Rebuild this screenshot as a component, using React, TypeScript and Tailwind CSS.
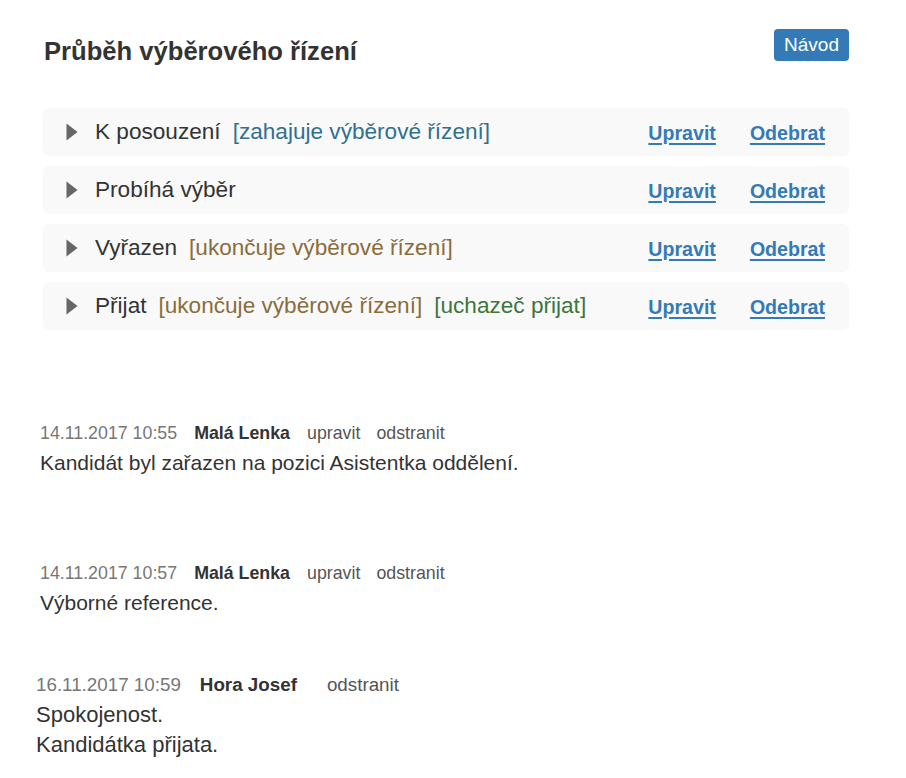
import React from "react";

const font = { fontFamily: '"Liberation Sans", Arial, sans-serif' };

function Triangle() {
  return (
    <svg width="12" height="18" viewBox="0 0 12 18" className="shrink-0">
      <path d="M0.5 0.5 L11.5 9 L0.5 17.5 Z" fill="#666666" />
    </svg>
  );
}

type Tag = { text: string; color: string };

const rows: { name: string; tags: Tag[] }[] = [
  { name: "K posouzení", tags: [{ text: "[zahajuje výběrové řízení]", color: "text-[#31708f]" }] },
  { name: "Probíhá výběr", tags: [] },
  { name: "Vyřazen", tags: [{ text: "[ukončuje výběrové řízení]", color: "text-[#8a6d3b]" }] },
  {
    name: "Přijat",
    tags: [
      { text: "[ukončuje výběrové řízení]", color: "text-[#8a6d3b]" },
      { text: "[uchazeč přijat]", color: "text-[#3c763d]" },
    ],
  },
];

function Row({ name, tags }: { name: string; tags: Tag[] }) {
  return (
    <div className="flex items-center h-[48px] rounded-[6px] bg-[#f9f9f9] pl-[23px] pr-[24px]">
      <Triangle />
      <div className="flex items-center ml-[17px] text-[22.6px] leading-[30px] text-[#333]">
        <span>{name}</span>
        {tags.map((t, i) => (
          <span key={i} className={`ml-[12px] ${t.color}`}>
            {t.text}
          </span>
        ))}
      </div>
      <div className="ml-auto flex items-center gap-[34px] text-[19.6px] font-bold text-[#337ab7] pt-[3px]">
        <a className="underline underline-offset-[3px] decoration-[2px]">Upravit</a>
        <a className="underline underline-offset-[3px] decoration-[2px]">Odebrat</a>
      </div>
    </div>
  );
}

function Comment({
  date,
  author,
  edit,
  lines,
  indent,
  top,
  large,
}: {
  date: string;
  author: string;
  edit: boolean;
  lines: string[];
  indent: string;
  top: string;
  large?: boolean;
}) {
  return (
    <div className={`${indent} ${top}`}>
      <div className={`flex items-center leading-[30px] ${large ? "text-[18.8px]" : "text-[17.8px]"}`}>
        <span className="text-[#777]">{date}</span>
        <span className={`${large ? "ml-[19px]" : "ml-[17px]"} font-bold text-[#333]`}>{author}</span>
        {edit ? <span className="ml-[17px] text-[#555]">upravit</span> : null}
        <span className={`${edit ? "ml-[16px]" : "ml-[30px]"} text-[#555]`}>odstranit</span>
      </div>
      {lines.map((l, i) => (
        <div key={i} className={`leading-[30px] text-[#333] ${large ? "text-[22px]" : "text-[21px]"}`}>
          {l}
        </div>
      ))}
    </div>
  );
}

export default function App() {
  return (
    <div className="w-[906px] min-h-[778px] bg-white" style={font}>
      <div className="ml-[43px] w-[806px] pt-[29px]">
        <div className="flex items-start justify-between">
          <h1 className="mt-[6px] ml-[1px] text-[25.6px] leading-[32px] font-bold text-[#333]">
            Průběh výběrového řízení
          </h1>
          <button className="h-[32px] w-[75px] rounded-[4px] bg-[#337ab7] text-white text-[19px] leading-[32px]">
            Návod
          </button>
        </div>
        <div className="mt-[41px] flex flex-col gap-[10px]">
          {rows.map((r, i) => (
            <Row key={i} name={r.name} tags={r.tags} />
          ))}
        </div>
      </div>
      <Comment
        top="mt-[88px]"
        indent="ml-[40px]"
        date="14.11.2017 10:55"
        author="Malá Lenka"
        edit
        lines={["Kandidát byl zařazen na pozici Asistentka oddělení."]}
      />
      <Comment
        top="mt-[80px]"
        indent="ml-[40px]"
        date="14.11.2017 10:57"
        author="Malá Lenka"
        edit
        lines={["Výborné reference."]}
      />
      <Comment
        top="mt-[52px]"
        indent="ml-[36px]"
        date="16.11.2017 10:59"
        author="Hora Josef"
        edit={false}
        large
        lines={["Spokojenost.", "Kandidátka přijata."]}
      />
    </div>
  );
}
